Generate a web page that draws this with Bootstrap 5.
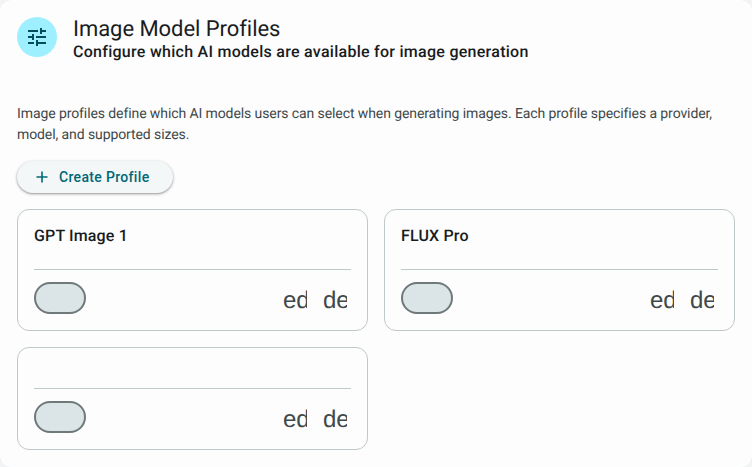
<!DOCTYPE html>
<html lang="en">
<head>
<meta charset="utf-8">
<title>Image Model Profiles</title>
<link href="https://cdn.jsdelivr.net/npm/bootstrap@5.3.0/dist/css/bootstrap.min.css" rel="stylesheet">
<style>
html, body { height: 100%; }
body { background: #f1f3f4; font-family: Roboto, sans-serif; overflow: hidden; text-rendering: geometricPrecision; }
.shell { background: #fdfdfd; border-radius: 12px; height: 467px; padding: 17px; }
.head-icon { width: 40px; height: 40px; background: #9eefff; flex: none; }
.head-title { font-size: 22px; line-height: 26px; font-weight: 400; letter-spacing: -.05px; color: #191c1d; margin: 0; }
.head-sub { font-size: 16px; line-height: 18px; font-weight: 500; letter-spacing: .27px; color: #191c1d; margin: 0; }
.intro { font-size: 14px; line-height: 21px; letter-spacing: -.095px; color: #3f484a; margin: 43px 0 15px; }
.make-btn { height: 32px; width: 156px; border-radius: 16px; background: #f3f7f8; border: 0; color: #006874; font-size: 14px; font-weight: 500; letter-spacing: .33px; box-shadow: 0 1px 2px rgba(0,0,0,.3), 0 1px 3px 1px rgba(0,0,0,.1); padding: 0 0 0 19px; gap: 11px; }
.profile-grid { display: grid; grid-template-columns: 351px 351px; gap: 16px; margin-top: 16px; }
.profile { border: 1px solid #bfc8ca; border-radius: 12px; background: #fdfdfd; padding: 16px; }
.profile-name { height: 44px; font-size: 16px; line-height: 20px; font-weight: 500; color: #191c1d; letter-spacing: .15px; border-bottom: 1px solid #bfc8ca; margin: 0; }
.profile-empty .profile-name { height: 25px; }
.profile-foot { height: 44px; padding-top: 12px; }
.pill { width: 52px; height: 32px; border-radius: 16px; background: #dbe4e6; border: 2px solid #6f797a; display: block; flex: none; }
.clip-ico { display: block; width: 24px; overflow: hidden; white-space: nowrap; font-family: "Liberation Sans", sans-serif; font-size: 24px; line-height: 24px; color: #3f484a; font-weight: 400; }
.acts { gap: 16px; padding: 7px 4px 0 0; }
</style>
</head>
<body>
<main class="shell">
  <header class="d-flex align-items-start gap-3">
    <div class="head-icon rounded-circle d-flex align-items-center justify-content-center">
      <svg width="24" height="24" viewBox="0 0 24 24" fill="#004f58" aria-hidden="true"><path d="M3 17v2h6v-2H3zM3 5v2h10V5H3zm10 16v-2h8v-2h-8v-2h-2v6h2zM7 9v2H3v2h4v2h2V9H7zm14 4v-2H11v2h10zm-6-4h2V7h4V5h-4V3h-2v6z"/></svg>
    </div>
    <div>
      <h1 class="head-title">Image Model Profiles</h1>
      <p class="head-sub">Configure which AI models are available for image generation</p>
    </div>
  </header>
  <p class="intro">Image profiles define which AI models users can select when generating images. Each profile specifies a provider, model, and supported sizes.</p>
  <button type="button" class="make-btn d-flex align-items-center">
    <svg width="12" height="12" viewBox="0 0 12 12" fill="#006874" aria-hidden="true"><path d="M5.2 .5h1.6v4.7h4.7v1.6H6.8v4.7H5.2V6.8H.5V5.2h4.7z"/></svg>
    <span>Create Profile</span>
  </button>
  <section class="profile-grid">
    <article class="profile">
      <h2 class="profile-name">GPT Image 1</h2>
      <div class="profile-foot d-flex justify-content-between">
        <span class="pill"></span>
        <div class="acts d-flex"><span class="clip-ico">edit</span><span class="clip-ico">delete</span></div>
      </div>
    </article>
    <article class="profile">
      <h2 class="profile-name">FLUX Pro</h2>
      <div class="profile-foot d-flex justify-content-between">
        <span class="pill"></span>
        <div class="acts d-flex"><span class="clip-ico">edit</span><span class="clip-ico">delete</span></div>
      </div>
    </article>
    <article class="profile profile-empty">
      <h2 class="profile-name"></h2>
      <div class="profile-foot d-flex justify-content-between">
        <span class="pill"></span>
        <div class="acts d-flex"><span class="clip-ico">edit</span><span class="clip-ico">delete</span></div>
      </div>
    </article>
  </section>
</main>
<script src="https://cdn.jsdelivr.net/npm/bootstrap@5.3.0/dist/js/bootstrap.bundle.min.js"></script>
</body>
</html>
